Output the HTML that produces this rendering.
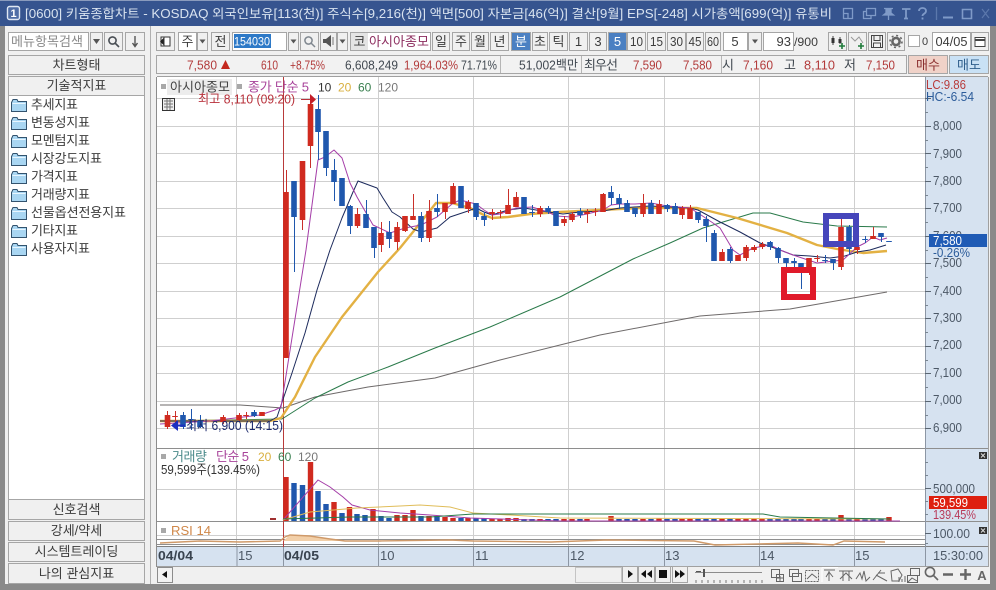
<!DOCTYPE html>
<html lang="ko"><head><meta charset="utf-8"><title>키움종합차트</title>
<style>
html,body{margin:0;padding:0;background:#8a8a8a;width:996px;height:590px;overflow:hidden}
svg{display:block}
text{font-family:"Liberation Sans","Noto Sans CJK KR","NanumGothic",sans-serif;font-size:13px;fill:#3c3c3c}
.b{fill:#f0f0f0;stroke:#a6a6a6}
.w{fill:#fff;stroke:#a6a6a6}
.c{text-anchor:middle}
.r{fill:#b23a3a}
.g{fill:#404850}
.ax{fill:#4c5866;font-size:13px}
.t{fill:#d8e2ef;font-size:12.5px}
</style></head><body>
<svg width="996" height="590" viewBox="0 0 996 590" xmlns="http://www.w3.org/2000/svg">
<defs>
<g id="folder"><path d="M.5 3.5V12.5H15.5V2.5H7L6 .5H2L.5 3.5Z" fill="#a9d6f2" stroke="#33536e"/><path d="M1.5 4.5H14.5" stroke="#e8f6ff"/></g>
</defs>
<!-- window -->
<rect width="996" height="590" fill="#8a8a8a"/>
<rect x="5" y="26" width="985" height="558" fill="#f0f0f0"/>
<rect y="0" width="996" height="26" fill="#36548f"/>
<rect x="0" y="0" width="996" height="1" fill="#8a9bbd"/>
<rect x="7.5" y="6.5" width="12" height="13" rx="2" fill="#4f6da6" stroke="#dfe7f3" stroke-width="1.4"/>
<text x="13.5" y="17" class="c" style="fill:#fff;font-size:11px;font-weight:bold">1</text>
<text x="25" y="18" textLength="807" lengthAdjust="spacingAndGlyphs" class="t">[0600] 키움종합차트 - KOSDAQ 외국인보유[113(천)] 주식수[9,216(천)] 액면[500] 자본금[46(억)] 결산[9월] EPS[-248] 시가총액[699(억)] 유통비</text>
<!-- title icons -->
<g fill="none" stroke="#7f9ac8" stroke-width="1.3">
<path d="M843.5 8.5H852.5V18.5H843.5ZM843.5 13.5H848V18.5"/>
<path d="M866.5 8.5H875.5V15.5H866.5ZM866.5 11.5H863.5V18.5H871V15.5"/>
<path d="M884 8.5H893M886 9V13L883.5 15H893.5L891 13V9Z" fill="#7f9ac8"/><path d="M888.5 15V20" />
<path d="M902 9H910.5M906 9V18.5M904 18.5H908" stroke-width="1.8"/>
<path d="M919 11C919 7 926 7 926 11C926 14 922.5 13.5 922.5 16M922.5 17.5V19.5" stroke-width="1.8"/>
<path d="M936.5 7V20" stroke="#5c78ac"/>
<path d="M943 17.5H953" stroke-width="2"/>
<path d="M962.5 9.5H971.5V18.5H962.5Z" stroke-width="1.6"/>
<path d="M982 9L989 18M989 9L982 18" stroke="#5c78ac" stroke-width="1.2"/>
</g>

<!-- left panel -->
<rect x="8.5" y="32.5" width="80" height="18" class="w"/>
<text x="11" y="46" textLength="72" style="fill:#8a8a8a;font-size:13px" lengthAdjust="spacingAndGlyphs">메뉴항목검색</text>
<rect x="90.5" y="32.5" width="12" height="18" class="b"/><path d="M93 39H100L96.5 44Z" fill="#555"/>
<rect x="104.5" y="32.5" width="18" height="18" class="b"/>
<g fill="none" stroke="#4a4f55" stroke-width="1.6"><circle cx="112.5" cy="40.5" r="3.6"/><path d="M115 43L119 47"/></g>
<rect x="125.5" y="32.5" width="19" height="18" class="b"/><path d="M135 36V46M132.5 43L135 46.5L137.5 43" fill="none" stroke="#555" stroke-width="1.4"/>
<rect x="8.5" y="55.5" width="136" height="19" class="b"/><text x="76.5" y="69.5" class="c">차트형태</text>
<rect x="8.5" y="76.5" width="136" height="19" class="b"/><text x="76.5" y="90" class="c">기술적지표</text>
<rect x="8.5" y="95.5" width="136" height="404" fill="#fff" stroke="#a6a6a6"/>
<use href="#folder" x="11" y="99"/><text x="31" y="109" textLength="47">추세지표</text>
<use href="#folder" x="11" y="117"/><text x="31" y="127" textLength="59">변동성지표</text>
<use href="#folder" x="11" y="135"/><text x="31" y="145" textLength="59">모멘텀지표</text>
<use href="#folder" x="11" y="153"/><text x="31" y="163" textLength="71">시장강도지표</text>
<use href="#folder" x="11" y="171"/><text x="31" y="181" textLength="47">가격지표</text>
<use href="#folder" x="11" y="189"/><text x="31" y="199" textLength="59">거래량지표</text>
<use href="#folder" x="11" y="207"/><text x="31" y="217" textLength="95">선물옵션전용지표</text>
<use href="#folder" x="11" y="225"/><text x="31" y="235" textLength="47">기타지표</text>
<use href="#folder" x="11" y="243"/><text x="31" y="253" textLength="59">사용자지표</text>
<rect x="8.5" y="499.5" width="136" height="20" class="b"/><text x="76.5" y="514" class="c">신호검색</text>
<rect x="8.5" y="521.5" width="136" height="19" class="b"/><text x="76.5" y="535" class="c">강세/약세</text>
<rect x="8.5" y="542.5" width="136" height="19" class="b"/><text x="76.5" y="556" class="c">시스템트레이딩</text>
<rect x="8.5" y="563.5" width="136" height="20" class="b"/><text x="76.5" y="578" class="c">나의 관심지표</text>
<path d="M150.5 26V584" stroke="#b0b0b0"/>

<!-- toolbar row 1 -->
<g>
<rect x="156.5" y="32.5" width="18" height="18" class="b"/><path d="M161 37H170V46H161Z" fill="#fff" stroke="#333"/><path d="M164 37V46" stroke="#333"/><path d="M160 41.5L163.5 38V45Z" fill="#222"/>
<rect x="178.5" y="32.5" width="18" height="18" class="w"/><text x="187.5" y="46" class="c">주</text>
<rect x="197.5" y="32.5" width="10" height="18" class="b"/><path d="M199.5 39.5H205.5L202.5 43.5Z" fill="#555"/>
<rect x="211.5" y="32.5" width="18" height="18" class="b"/><text x="220.5" y="46" class="c">전</text>
<rect x="232.5" y="32.5" width="54" height="18" class="w"/>
<rect x="234" y="34" width="37" height="14" fill="#2d79c7"/>
<text x="234" y="45.5" textLength="36" lengthAdjust="spacingAndGlyphs" style="fill:#fff;font-size:12px">154030</text>
<rect x="288.5" y="32.5" width="10" height="18" class="b"/><path d="M290.5 39.5H296.5L293.5 43.5Z" fill="#555"/>
<rect x="300.5" y="32.5" width="18" height="18" class="b"/>
<g fill="none" stroke="#7f878f" stroke-width="1.5"><circle cx="308.5" cy="40.5" r="3.6"/><path d="M311 43L315 47"/></g>
<rect x="320.5" y="32.5" width="16" height="18" class="b"/><path d="M323 39H326L331 35V47L326 43H323Z" fill="#555"/><path d="M333 37V45" stroke="#777"/>
<rect x="337.5" y="32.5" width="10" height="18" class="b"/><path d="M339.5 39.5H345.5L342.5 43.5Z" fill="#555"/>
<rect x="350.5" y="32.5" width="80" height="18" class="w"/>
<rect x="351" y="33" width="17" height="17" fill="#e4e4e4"/>
<text x="359.5" y="46" class="c">코</text>
<text x="369" y="46" textLength="60" style="fill:#8c2c5e">아시아종모</text>
<rect x="432.5" y="32.5" width="17" height="18" class="b"/><text x="441" y="46" class="c">일</text>
<rect x="452.5" y="32.5" width="17" height="18" class="b"/><text x="461" y="46" class="c">주</text>
<rect x="471.5" y="32.5" width="17" height="18" class="b"/><text x="480" y="46" class="c">월</text>
<rect x="490.5" y="32.5" width="18" height="18" class="b"/><text x="499.5" y="46" class="c">년</text>
<rect x="511.5" y="32.5" width="19" height="18" fill="#4b80c2" stroke="#a6a6a6"/><text x="521" y="46" class="c" style="fill:#fff">분</text>
<rect x="532.5" y="32.5" width="15" height="18" class="b"/><text x="540" y="46" class="c">초</text>
<rect x="549.5" y="32.5" width="18" height="18" class="b"/><text x="558.5" y="46" class="c">틱</text>
<rect x="569.5" y="32.5" width="18" height="18" class="b"/><text x="578.5" y="46" class="c">1</text>
<rect x="589.5" y="32.5" width="17" height="18" class="b"/><text x="598" y="46" class="c">3</text>
<rect x="608.5" y="32.5" width="18" height="18" fill="#4b80c2" stroke="#a6a6a6"/><text x="617.5" y="46" class="c" style="fill:#fff">5</text>
<rect x="627.5" y="32.5" width="18" height="18" class="b"/><text x="636.5" y="46" class="c" textLength="13" lengthAdjust="spacingAndGlyphs">10</text>
<rect x="647.5" y="32.5" width="18" height="18" class="b"/><text x="656.5" y="46" class="c" textLength="13" lengthAdjust="spacingAndGlyphs">15</text>
<rect x="667.5" y="32.5" width="18" height="18" class="b"/><text x="676.5" y="46" class="c" textLength="13" lengthAdjust="spacingAndGlyphs">30</text>
<rect x="686.5" y="32.5" width="17" height="18" class="b"/><text x="695" y="46" class="c" textLength="13" lengthAdjust="spacingAndGlyphs">45</text>
<rect x="705.5" y="32.5" width="15" height="18" class="b"/><text x="713" y="46" class="c" textLength="12" lengthAdjust="spacingAndGlyphs">60</text>
<rect x="723.5" y="32.5" width="24" height="18" class="w"/><text x="735" y="46" class="c">5</text>
<rect x="748.5" y="32.5" width="13" height="18" class="b"/><path d="M752 39.5H758L755 43.5Z" fill="#555"/>
<rect x="763.5" y="32.5" width="30" height="18" class="w"/><text x="791" y="46" style="text-anchor:end">93</text>
<text x="794" y="46" textLength="24" lengthAdjust="spacingAndGlyphs" style="font-size:12px">/900</text>
<rect x="828.5" y="32.5" width="18" height="18" class="b"/><path d="M833 36V45M840 37V44" stroke="#444"/><rect x="831.5" y="38" width="3" height="5" fill="#333"/><rect x="838.5" y="39" width="3" height="4" fill="#333"/><path d="M842 43V49M839 46H845" stroke="#1f7a3a" stroke-width="1.6"/>
<rect x="848.5" y="32.5" width="18" height="18" class="b"/><path d="M851 37L855 41L859 37L863 43" fill="none" stroke="#999"/><path d="M861 43V49M858 46H864" stroke="#1f7a3a" stroke-width="1.6"/>
<rect x="868.5" y="32.5" width="17" height="18" class="b"/><path d="M871.5 35.5H882.5V47.5H871.5ZM874 35.5V40.5H880V35.5M873.5 47V43H880.5V47" fill="none" stroke="#444"/>
<rect x="887.5" y="32.5" width="17" height="18" class="b"/><circle cx="896" cy="41.5" r="3.6" fill="none" stroke="#666" stroke-width="2.6"/><circle cx="896" cy="41.5" r="6" fill="none" stroke="#666" stroke-width="1.6" stroke-dasharray="2 2.7"/>
<rect x="908.5" y="35.5" width="11" height="11" class="w"/>
<text x="925" y="45" class="c" style="font-size:11px">0</text>
<rect x="932.5" y="32.5" width="38" height="18" class="w"/><text x="951.5" y="46" class="c" textLength="32" lengthAdjust="spacingAndGlyphs">04/05</text>
<rect x="971.5" y="32.5" width="17" height="18" class="b"/><path d="M975 37.5H985V46.5H975Z" fill="#fff" stroke="#444"/><path d="M975 40H985" stroke="#444" stroke-width="2"/>
</g>

<!-- row 2 -->
<rect x="156.5" y="55.5" width="750" height="18" fill="#f2f2f2" stroke="#a6a6a6"/>
<g>
<text x="187" y="69.5" textLength="30" class="r" lengthAdjust="spacingAndGlyphs">7,580</text>
<path d="M221 69L225.5 60L230 69Z" fill="#c4281e"/>
<text x="261" y="69.5" textLength="17" class="r" lengthAdjust="spacingAndGlyphs">610</text>
<text x="290" y="69.5" textLength="35" class="r" lengthAdjust="spacingAndGlyphs">+8.75%</text>
<text x="345" y="69.5" textLength="53" class="g" lengthAdjust="spacingAndGlyphs">6,608,249</text>
<text x="404" y="69.5" textLength="54" class="r" lengthAdjust="spacingAndGlyphs">1,964.03%</text>
<text x="461" y="69.5" textLength="36" class="g" lengthAdjust="spacingAndGlyphs">71.71%</text>
<text x="519" y="69.5" textLength="59" class="g" lengthAdjust="spacingAndGlyphs">51,002백만</text>
<text x="584" y="69.5" textLength="34" class="g">최우선</text>
<text x="633" y="69.5" textLength="29" class="r" lengthAdjust="spacingAndGlyphs">7,590</text>
<text x="683" y="69.5" textLength="29" class="r" lengthAdjust="spacingAndGlyphs">7,580</text>
<text x="722" y="69.5" class="g">시</text>
<text x="743" y="69.5" textLength="30" class="r" lengthAdjust="spacingAndGlyphs">7,160</text>
<text x="784" y="69.5" class="g">고</text>
<text x="804" y="69.5" textLength="31" class="r" lengthAdjust="spacingAndGlyphs">8,110</text>
<text x="844" y="69.5" class="g">저</text>
<text x="866" y="69.5" textLength="29" class="r" lengthAdjust="spacingAndGlyphs">7,150</text>
</g>
<path d="M500.5 56V73M581.5 56V73M721.5 56V73" stroke="#b5b5b5"/>
<rect x="908.5" y="55.5" width="39" height="18" fill="#f0d2c8" stroke="#a6a6a6"/><text x="928" y="69.5" class="c" style="fill:#8c3030">매수</text>
<rect x="949.5" y="55.5" width="39" height="18" fill="#c9e1f5" stroke="#a6a6a6"/><text x="969" y="69.5" class="c" style="fill:#2f5f8c">매도</text>

<!-- chart frame -->
<rect x="157" y="77" width="768" height="470" fill="#fff"/>
<rect x="925" y="77" width="63" height="470" fill="#d6e2f0"/>
<rect x="157" y="547" width="831" height="19" fill="#d6e2f0"/>
<rect x="156" y="77" width="1" height="490" fill="#8c8c8c"/>
<path d="M157 76.5H988M988.5 77V566M157 566.5H989" stroke="#a0a0a0" fill="none"/>
<!-- grid -->
<path d="M157 98.5H925M157 126.5H925M157 153.5H925M157 181.5H925M157 208.5H925M157 236.5H925M157 263.5H925M157 291.5H925M157 318.5H925M157 346.5H925M157 373.5H925M157 401.5H925M157 428.5H925M157 489.5H925M157 535.5H925M236.5 77V547M378.5 77V547M473.5 77V547M568.5 77V547M664.5 77V547M759.5 77V547M854.5 77V547" stroke="#cfcfcf" fill="none"/>
<path d="M157 448.5H925M157 521.5H925" stroke="#8e8e8e"/>
<path d="M157 539.5H925M157 544.5H925" stroke="#8f8f8f"/>
<path d="M157 546.5H988" stroke="#808080"/>
<path d="M925 448.5H988M925 521.5H988" stroke="#8e8e8e"/>
<path d="M925.5 77V566M237 547V566M283.5 547V566M378.5 547V566M473.5 547V566M568.5 547V566M664.5 547V566M759.5 547V566M854.5 547V566" stroke="#8c96a4"/>
<path d="M283.5 77V547" stroke="#b83a3a"/>

<!-- MAs main -->
<g fill="none" stroke-linejoin="round">
<path d="M160 405L240 405L283 408L315 397L368 387L435 378L500 360L600 335L700 316L790 309L887 292" stroke="#6e6a6a" stroke-width="1"/>
<path d="M160 421L282 419L315 398L348 382L388 367L435 348L490 327L560 297L633 259L670 243L703 228L753 213L770 213L803 222L837 226L887 227" stroke="#2a7a4a" stroke-width="1"/>
<path d="M160 421H270L281 418L295 397L315 357L342 317L362 292L378 272L400 248L417 227L436 203L452 203L470 208L484 215L492 218L508 217L530 214L560 212L600 210L640 208L697 208L737 218L787 233L817 245L837 249L863 253L887 251" stroke="#e3b143" stroke-width="2.4"/>
<path d="M160 421H270L277 417L292 373L305 333L317 290L330 250L342 218L353 192L358 181L377 188L383 198L392 212L400 217L413 229L421 232L437 228L450 217L468 211L476 208L484 212L492 215L508 210L524 208L548 212L563 214L580 212L603 211L620 208L650 206L690 208L698 210L720 222L740 232L760 243L780 250L793 255L810 256L830 258L845 256L857 252L870 250L886 245" stroke="#1c2a5c" stroke-width="1"/>
<path d="M160 424L210 421L260 415L275 410L281 407L306 250L312 205L318 160L325 157L334 150L342 158L350 183L357 197L373 225L390 233L405 228L421 225L437 217L452 204L460 200L476 204L484 210L492 215L500 214L516 208L532 207L548 212L556 216L572 217L587 214L603 210L611 205L619 204L635 204L651 203L667 206L690 208L698 213L713 223L720 228L733 250L740 255L753 248L770 245L780 250L793 255L817 263L843 260L857 247L865 243L873 237L880 240L887 238" stroke="#a53ea8" stroke-width="1"/>
</g>
<!-- wicks -->
<path fill="none" stroke="#c9302a" d="M286.5 170V358M302.5 161V230M310.5 104V168M357.5 208V228M381.5 222V252M397.5 222V250M405.5 216V232M413.5 194V220M429.5 200V242M445.5 203V219M453.5 183V204M468.5 200V213M492.5 209V220M500.5 210V218M508.5 189V214M516.5 192V207M540.5 206V217M564.5 216V226M572.5 212V222M587.5 209V223M595.5 208V216M603.5 193V212M643.5 194V217M659.5 200V214M682.5 206V219M690.5 205V219M722.5 249V261M738.5 255V261M746.5 245V261M754.5 245V252M762.5 242V249M809.5 258V275M817.5 255V262M841.5 217V270M857.5 247V254M873.5 227V239M167.5 411V429M175.5 411V425M223.5 415V424M239.5 413V421M246.5 412V419"/>
<path fill="none" stroke="#1f57ad" d="M294.5 181V272M318.5 95V160M326.5 131V176M334.5 159V201M342.5 178V206M350.5 205V234M366.5 200V228M374.5 227V258M389.5 221V248M421.5 212V242M437.5 194V217M461.5 186V208M476.5 203V220M484.5 212V226M524.5 197V214M532.5 205V217M548.5 206V214M556.5 211V226M580.5 208V218M611.5 186V205M619.5 194V209M627.5 200V212M635.5 208V217M651.5 200V214M667.5 204V212M675.5 203V214M698.5 212V223M706.5 216V242M714.5 230V261M730.5 247V263M770.5 241V250M778.5 247V263M786.5 258V267M794.5 258V267M801.5 263V289M825.5 255V263M833.5 259V270M849.5 225V255M865.5 236V243M881.5 233V242M183.5 412V429M191.5 409V430M200.5 415V428M254.5 410V417"/>
<!-- bodies -->
<path fill="none" stroke="#d02a1f" stroke-width="5.6" d="M286 192V358M302.5 161V220M310.5 104V146M357.5 214V226M381 233V245M397 227V242M405 216V231M413 216V220M429 211V238M445 203V212M453 186V204M468 202V209M492 212V214M500 212V213M508 205V214M516 197V207M540 208V214M564 219V223M572 214V220M587 212V214M595 211V212M603 194V212M643 203V214M659 204V214M682 208V215M690 208V219M722 252V261M738 255V261M746 247V258M754 247V250M762 244V247M809 258V267M817 258V259M841 227V267M857 247V250M873 236V239M167.5 415V427M223 417V422M239 415V420M262 412V416M175 416V417M246 415V416"/>
<path fill="none" stroke="#1f57ad" stroke-width="5.6" d="M294 181V217M318 109V132M326 131V168M334 170V182M342 178V206M350 206V226M366 214V228M374 227V248M389 232V239M421 216V238M437 208V212M461 186V208M476 203V217M484 216V220M524 197V214M532 212V213M548 208V212M556 211V226M580 211V215M611 192V198M619 198V204M627 203V212M635 208V214M651 203V214M667 205V209M675 206V214M698 212V220M706 219V226M714 233V261M730 249V261M770 242V247M778 248V258M786 258V263M794 261V263M801 263V267M825 260V261M833 259V263M849 227V249M865 239V240M881 233V237M889 241V242M183 415V427M200 421V427M254 412V416M191 419V420"/>
<!-- highlight boxes -->
<rect x="826" y="216" width="30" height="28" fill="none" stroke="#4646bb" stroke-width="6"/>
<rect x="784" y="270" width="29" height="27" fill="none" stroke="#e01a2a" stroke-width="6"/>
<!-- chart labels -->
<rect x="161" y="84" width="5" height="5" fill="#a8a8a8"/>
<rect x="167" y="79" width="65" height="16" fill="#ececec"/>
<text x="170" y="91.5" textLength="60" style="fill:#444">아시아종모</text>
<rect x="237" y="84" width="5" height="5" fill="#a8a8a8"/>
<text x="248" y="91.5" textLength="61" style="fill:#a8439a">종가 단순 5</text>
<text x="318" y="91.5" style="fill:#333;font-size:12px">10</text>
<text x="338" y="91.5" style="fill:#d9b040;font-size:12px">20</text>
<text x="358" y="91.5" style="fill:#3a8050;font-size:12px">60</text>
<text x="378" y="91.5" style="fill:#777;font-size:12px">120</text>
<rect x="162.5" y="98.5" width="12" height="12" fill="#eee" stroke="#333"/><path d="M164 101H173M164 104H173M164 107H173M167 99V110M170 99V110" stroke="#777"/>
<text x="198" y="103.5" textLength="97" lengthAdjust="spacingAndGlyphs" style="fill:#b8303a">최고 8,110 (09:20)</text>
<path d="M301 99.5H311" stroke="#b8303a"/><path d="M310 94L316 99.5L310 105Z" fill="#c41e28"/>
<path d="M173 425.5H185" stroke="#1c2fc0" stroke-width="2"/><path d="M178 420L171 425.5L178 431Z" fill="#1c2fc0"/>
<text x="186" y="430" textLength="97" lengthAdjust="spacingAndGlyphs" style="fill:#1c2a6c">최저 6,900 (14:15)</text>
<!-- volume -->
<rect x="161" y="454" width="5" height="5" fill="#a8a8a8"/>
<text x="172" y="461" textLength="35" style="fill:#4a8a8a">거래량</text>
<text x="216" y="461" textLength="33" style="fill:#a8439a">단순 5</text>
<text x="258" y="461" style="fill:#d9b040;font-size:12px">20</text>
<text x="278" y="461" style="fill:#3a8050;font-size:12px">60</text>
<text x="298" y="461" style="fill:#777;font-size:12px">120</text>
<text x="161" y="474" textLength="99" lengthAdjust="spacingAndGlyphs" style="fill:#333">59,599주(139.45%)</text>
<path fill="none" stroke="#d02a1f" stroke-width="5.4" d="M286 477V521M310.5 462V521M334 502V521M349.5 507V521M373 509V521M397 515V521M405 515V521M413 510V521M429 516V521M445 517V521M453 518V521M468 518V521M492 519V521M500 519V521M508 518V521M516 518V521M540 519V521M564 519V521M572 519V521M587 519V521M611 516V521M643 519V521M659 518V521M682 519V521M690 519V521M722 519V521M738 519V521M746 519V521M754 519V521M762 519V521M809 519V521M817 519V521M841 515V521M857 518V521M889 517V521"/>
<path fill="none" stroke="#1f57ad" stroke-width="5.4" d="M294 483V521M302.5 485V521M318 491V521M326 504V521M342 513V521M357 514V521M365 515V521M381 516V521M389 518V521M421 516V521M437 516V521M461 518V521M476 518V521M484 518V521M524 519V521M532 519V521M548 519V521M556 519V521M580 519V521M619 519V521M627 519V521M635 519V521M651 519V521M667 519V521M675 519V521M698 519V521M706 519V521M714 519V521M730 519V521M770 519V521M778 519V521M786 519V521M794 519V521M801 519V521M825 519V521M833 518V521M849 518V521M865 519V521M873 519V521M881 519V521"/>
<g fill="none" stroke-width="1">
<path d="M283 520L318 480L330 487L343 497L352 505L370 510L400 513L430 515L470 518L560 521L900 521" stroke="#a53ea8"/>
<path d="M283 520L310 512L357 508L400 506L420 505L450 507L473 513L510 515L560 518L890 519" stroke="#e0bd5a"/>
<path d="M283 519L350 517L430 517L473 514L763 514L780 517L890 519" stroke="#2a7a4a"/>
<path d="M270 519H276" stroke="#a03030" stroke-width="2"/>
</g>
<!-- RSI -->
<rect x="161" y="528" width="5" height="5" fill="#a8a8a8"/>
<text x="171" y="535" textLength="40" lengthAdjust="spacingAndGlyphs" style="fill:#d0884a">RSI 14</text>
<path d="M283 541L290 535L310 536L330 539L345 541Z" fill="#f2cfa8"/>
<path d="M160 543L200 541L240 542L280 541L285 537L290 535L310 536L330 539L345 541L380 541L450 540L473 541L551 542L607 540L694 541L715 545L798 543L833 545L844 541L885 542" fill="none" stroke="#cf9a6a" stroke-width="1.4"/>

<!-- axis ticks & labels -->
<path d="M925 98.5H931M925 126.5H931M925 153.5H931M925 181.5H931M925 208.5H931M925 236.5H931M925 263.5H931M925 291.5H931M925 318.5H931M925 346.5H931M925 373.5H931M925 401.5H931M925 428.5H931M925 488.5H931M925 533.5H931" stroke="#5a6672"/>
<path d="M925 112.5H928M925 140.5H928M925 167.5H928M925 195.5H928M925 222.5H928M925 250.5H928M925 277.5H928M925 305.5H928M925 332.5H928M925 360.5H928M925 387.5H928M925 415.5H928M925 462.5H928M925 475.5H928M925 501.5H928M925 514.5H928M925 543.5H928" stroke="#7a8692"/>
<g>
<text x="933" y="130" textLength="29" class="ax" lengthAdjust="spacingAndGlyphs">8,000</text>
<text x="933" y="158" textLength="29" class="ax" lengthAdjust="spacingAndGlyphs">7,900</text>
<text x="933" y="185" textLength="29" class="ax" lengthAdjust="spacingAndGlyphs">7,800</text>
<text x="933" y="212" textLength="29" class="ax" lengthAdjust="spacingAndGlyphs">7,700</text>
<text x="933" y="240" textLength="29" class="ax" lengthAdjust="spacingAndGlyphs">7,600</text>
<text x="933" y="267" textLength="29" class="ax" lengthAdjust="spacingAndGlyphs">7,500</text>
<text x="933" y="295" textLength="29" class="ax" lengthAdjust="spacingAndGlyphs">7,400</text>
<text x="933" y="322" textLength="29" class="ax" lengthAdjust="spacingAndGlyphs">7,300</text>
<text x="933" y="349" textLength="29" class="ax" lengthAdjust="spacingAndGlyphs">7,200</text>
<text x="933" y="377" textLength="29" class="ax" lengthAdjust="spacingAndGlyphs">7,100</text>
<text x="933" y="404" textLength="29" class="ax" lengthAdjust="spacingAndGlyphs">7,000</text>
<text x="933" y="432" textLength="29" class="ax" lengthAdjust="spacingAndGlyphs">6,900</text>
<text x="933" y="493" textLength="42" class="ax" lengthAdjust="spacingAndGlyphs">500,000</text>
<text x="933" y="538" textLength="37" class="ax" lengthAdjust="spacingAndGlyphs">100.00</text>
<text x="933" y="560" textLength="50" class="ax" lengthAdjust="spacingAndGlyphs">15:30:00</text>
</g>
<text x="926" y="89" textLength="40" lengthAdjust="spacingAndGlyphs" style="fill:#b83a3a">LC:9.86</text>
<text x="926" y="101" textLength="48" lengthAdjust="spacingAndGlyphs" style="fill:#2c5c9a">HC:-6.54</text>
<rect x="929" y="234" width="58" height="13" fill="#1f5bb5"/>
<text x="933" y="245" textLength="29" lengthAdjust="spacingAndGlyphs" style="fill:#fff">7,580</text>
<text x="933" y="257" textLength="37" lengthAdjust="spacingAndGlyphs" style="fill:#2c5c9a">-0.26%</text>
<rect x="929" y="496" width="58" height="13" fill="#de1f0f"/>
<text x="933" y="507" textLength="35" lengthAdjust="spacingAndGlyphs" style="fill:#fff">59,599</text>
<text x="933" y="519" textLength="43" lengthAdjust="spacingAndGlyphs" style="fill:#b83a5a">139.45%</text>
<rect x="979" y="452" width="8" height="7" fill="#333"/><path d="M981 453.5L985 457.5M985 453.5L981 457.5" stroke="#ddd"/>
<rect x="979" y="527" width="8" height="7" fill="#333"/><path d="M981 528.5L985 532.5M985 528.5L981 532.5" stroke="#ddd"/>
<!-- x axis labels -->
<g>
<text x="158" y="560" textLength="35" lengthAdjust="spacingAndGlyphs" style="font-weight:bold;fill:#3a4450">04/04</text>
<text x="238" y="560" style="fill:#4c5866">15</text>
<text x="284" y="560" textLength="35" lengthAdjust="spacingAndGlyphs" style="font-weight:bold;fill:#3a4450">04/05</text>
<text x="380" y="560" style="fill:#4c5866">10</text>
<text x="475" y="560" style="fill:#4c5866">11</text>
<text x="570" y="560" style="fill:#4c5866">12</text>
<text x="665" y="560" style="fill:#4c5866">13</text>
<text x="760" y="560" style="fill:#4c5866">14</text>
<text x="855" y="560" style="fill:#4c5866">15</text>
</g>

<!-- bottom toolbar -->
<rect x="157.5" y="567.5" width="15" height="15" fill="#f2f2f2" stroke="#8c8c8c"/>
<path d="M167 571V578L162 574.5Z" fill="#111"/>
<g transform="translate(0,-3)">
<rect x="575.5" y="570.5" width="46" height="15" fill="#f0f0f0" stroke="#c4c4c4"/>
<rect x="622.5" y="569.5" width="15" height="16" class="b"/><path d="M628 573V581L633 577Z" fill="#111"/>
<rect x="638.5" y="569.5" width="16" height="16" class="b"/><path d="M646 573V581L641 577ZM652 573V581L647 577Z" fill="#111"/>
<rect x="655.5" y="569.5" width="15" height="16" class="b"/><rect x="659" y="573" width="8" height="8" fill="#111"/>
<rect x="672.5" y="569.5" width="15" height="16" class="b"/><path d="M675 573V581L680 577ZM680 573V581L685 577Z" fill="#111"/>
<path d="M695 575.5H762" stroke="#8c8c8c"/><path d="M696 574.5H701" stroke="#555"/>
<rect x="703" y="572" width="2" height="8" fill="#555"/>
<path d="M696 583V586M702 583V586M708 583V586M714 583V586M720 583V586M726 583V586M732 583V586M738 583V586M744 583V586M750 583V586M756 583V586M762 583V586" stroke="#777"/>
<g fill="none" stroke="#666">
<rect x="771.5" y="572.5" width="8" height="8"/><rect x="776.5" y="577.5" width="7" height="7"/><path d="M780 579V584M777 581H783"/>
<rect x="789.5" y="572.5" width="9" height="7"/><rect x="792.5" y="576.5" width="9" height="8"/>
<rect x="805.5" y="573.5" width="13" height="11" stroke-dasharray="2 1"/><path d="M807 582L812 577L817 581"/>
<path d="M822 570.5H838M822 570.5V585" stroke="#fff"/><path d="M824 573H835M829 574V584M829 575L826 580M829 575L833 580"/>
<path d="M839 574H853M843 574V584M849 574V584M840 582L846 576L852 582"/>
<path d="M856 582L860 576L862 582L864 574L866 584L870 580"/>
<path d="M873 583L881 573M876 578L887 584M878 576H885"/>
<path d="M891 574L898 572L902 578L899 584H892ZM899 580V585M902 582V585M905 579V585" />
<rect x="907.5" y="578.5" width="10" height="7"/><rect x="910.5" y="571.5" width="9" height="7"/><path d="M908 585L912 581L917 584"/>
</g>
<g fill="none" stroke="#666" stroke-width="1.6"><circle cx="930" cy="575" r="4.6"/><path d="M933.5 578.5L938 583"/></g>
<path d="M943 577.5H953M960 577.5H971M965.5 572V583" stroke="#666" stroke-width="2.4"/>
<text x="982" y="583" class="c" style="fill:#666;font-size:13px;font-weight:bold">A</text>
</g>
<rect x="0" y="584" width="996" height="6" fill="#8a8a8a"/>
<rect x="0" y="26" width="5" height="564" fill="#8a8a8a"/>
<rect x="990" y="26" width="6" height="564" fill="#8a8a8a"/>
</svg>
</body></html>
